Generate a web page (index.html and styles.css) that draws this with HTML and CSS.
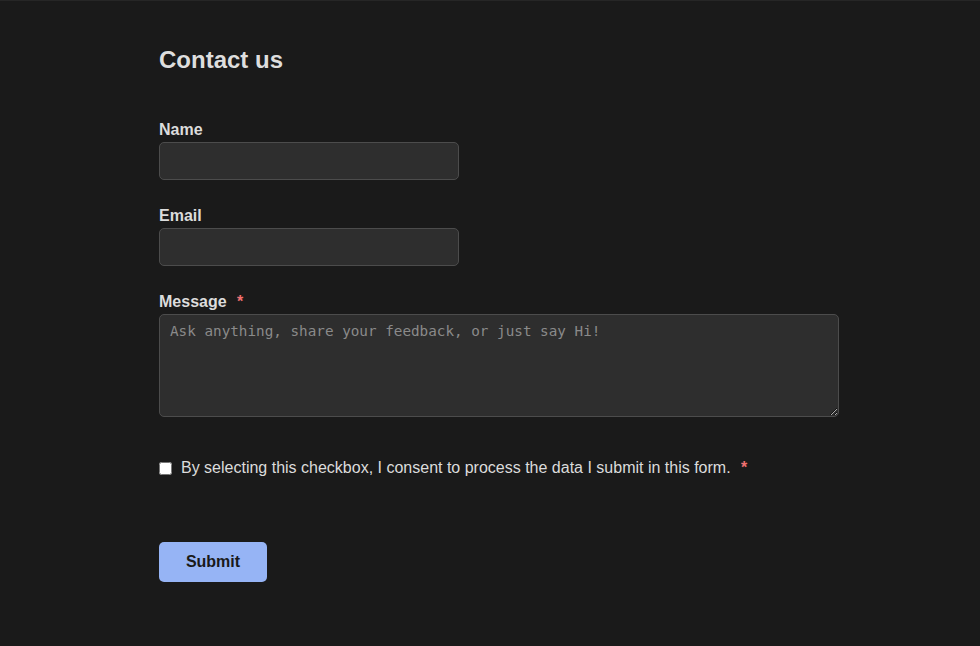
FILE: index.html
```html
<!DOCTYPE html>
<html lang="en">
<head>
    <title>Contact us</title>
    <link rel="stylesheet" href="styles.css">
</head>
<body>
    <div class="container">
        <h1 class="title">Contact us</h1>

        <form class="form">
            <div class="field">
                <label for="name">Name</label>
                <input type="text" id="name" class="input">
            </div>

            <div class="field">
                <label for="email">Email</label>
                <input type="email" id="email" class="input">
            </div>

            <div class="field">
                <label for="message">Message <span class="req">*</span></label>
                <textarea id="message" placeholder="Ask anything, share your feedback, or just say Hi!"></textarea>
            </div>

            <div class="consent">
                <input type="checkbox" id="consent">
                <label for="consent">By selecting this checkbox, I consent to process the data I submit in this form. <span class="req">*</span></label>
            </div>

            <button type="submit" class="submit">Submit</button>
        </form>
    </div>
</body>
</html>
```

FILE: styles.css
```css
* {
    box-sizing: border-box;
    margin: 0;
    padding: 0;
}

body {
    background-color: #1a1a1a;
    border-top: 1px solid #262626;
    font-family: "Liberation Sans", Arial, sans-serif;
    color: #dcdcdc;
    min-height: 100vh;
}

.container {
    width: 680px;
    margin-left: 159px;
    padding-top: 45px;
}

.title {
    font-size: 24px;
    font-weight: 700;
    line-height: 28px;
    color: #dedede;
    margin-bottom: 47px;
}

.field {
    margin-bottom: 27px;
}

.field label {
    display: block;
    font-size: 16px;
    font-weight: 700;
    line-height: 18px;
    margin-bottom: 3px;
}

.req {
    color: #f07070;
    margin-left: 6px;
    font-weight: 700;
}

.input,
textarea {
    display: block;
    background: #2e2e2e;
    border: 1px solid #4c4c4c;
    border-radius: 5px;
    color: #dcdcdc;
    font: inherit;
}

.input {
    width: 300px;
    height: 38px;
    padding: 0 10px;
}

textarea {
    width: 680px;
    height: 103px;
    padding: 8px 10px;
    font-family: "DejaVu Sans Mono", monospace;
    font-size: 14.3px;
    resize: vertical;
}

textarea::placeholder {
    color: #8a8a8a;
}

.consent {
    display: flex;
    align-items: center;
    gap: 9px;
    margin-top: 42px;
    font-size: 16px;
    line-height: 18px;
}

.consent input {
    width: 13px;
    height: 13px;
    margin: 0;
}

.consent .req {
    margin-left: 6px;
}

.submit {
    display: block;
    margin-top: 65px;
    width: 108px;
    height: 40px;
    background: #96b4f5;
    color: #1a1a1a;
    border: none;
    border-radius: 5px;
    font: inherit;
    font-size: 16px;
    font-weight: 700;
}
```
